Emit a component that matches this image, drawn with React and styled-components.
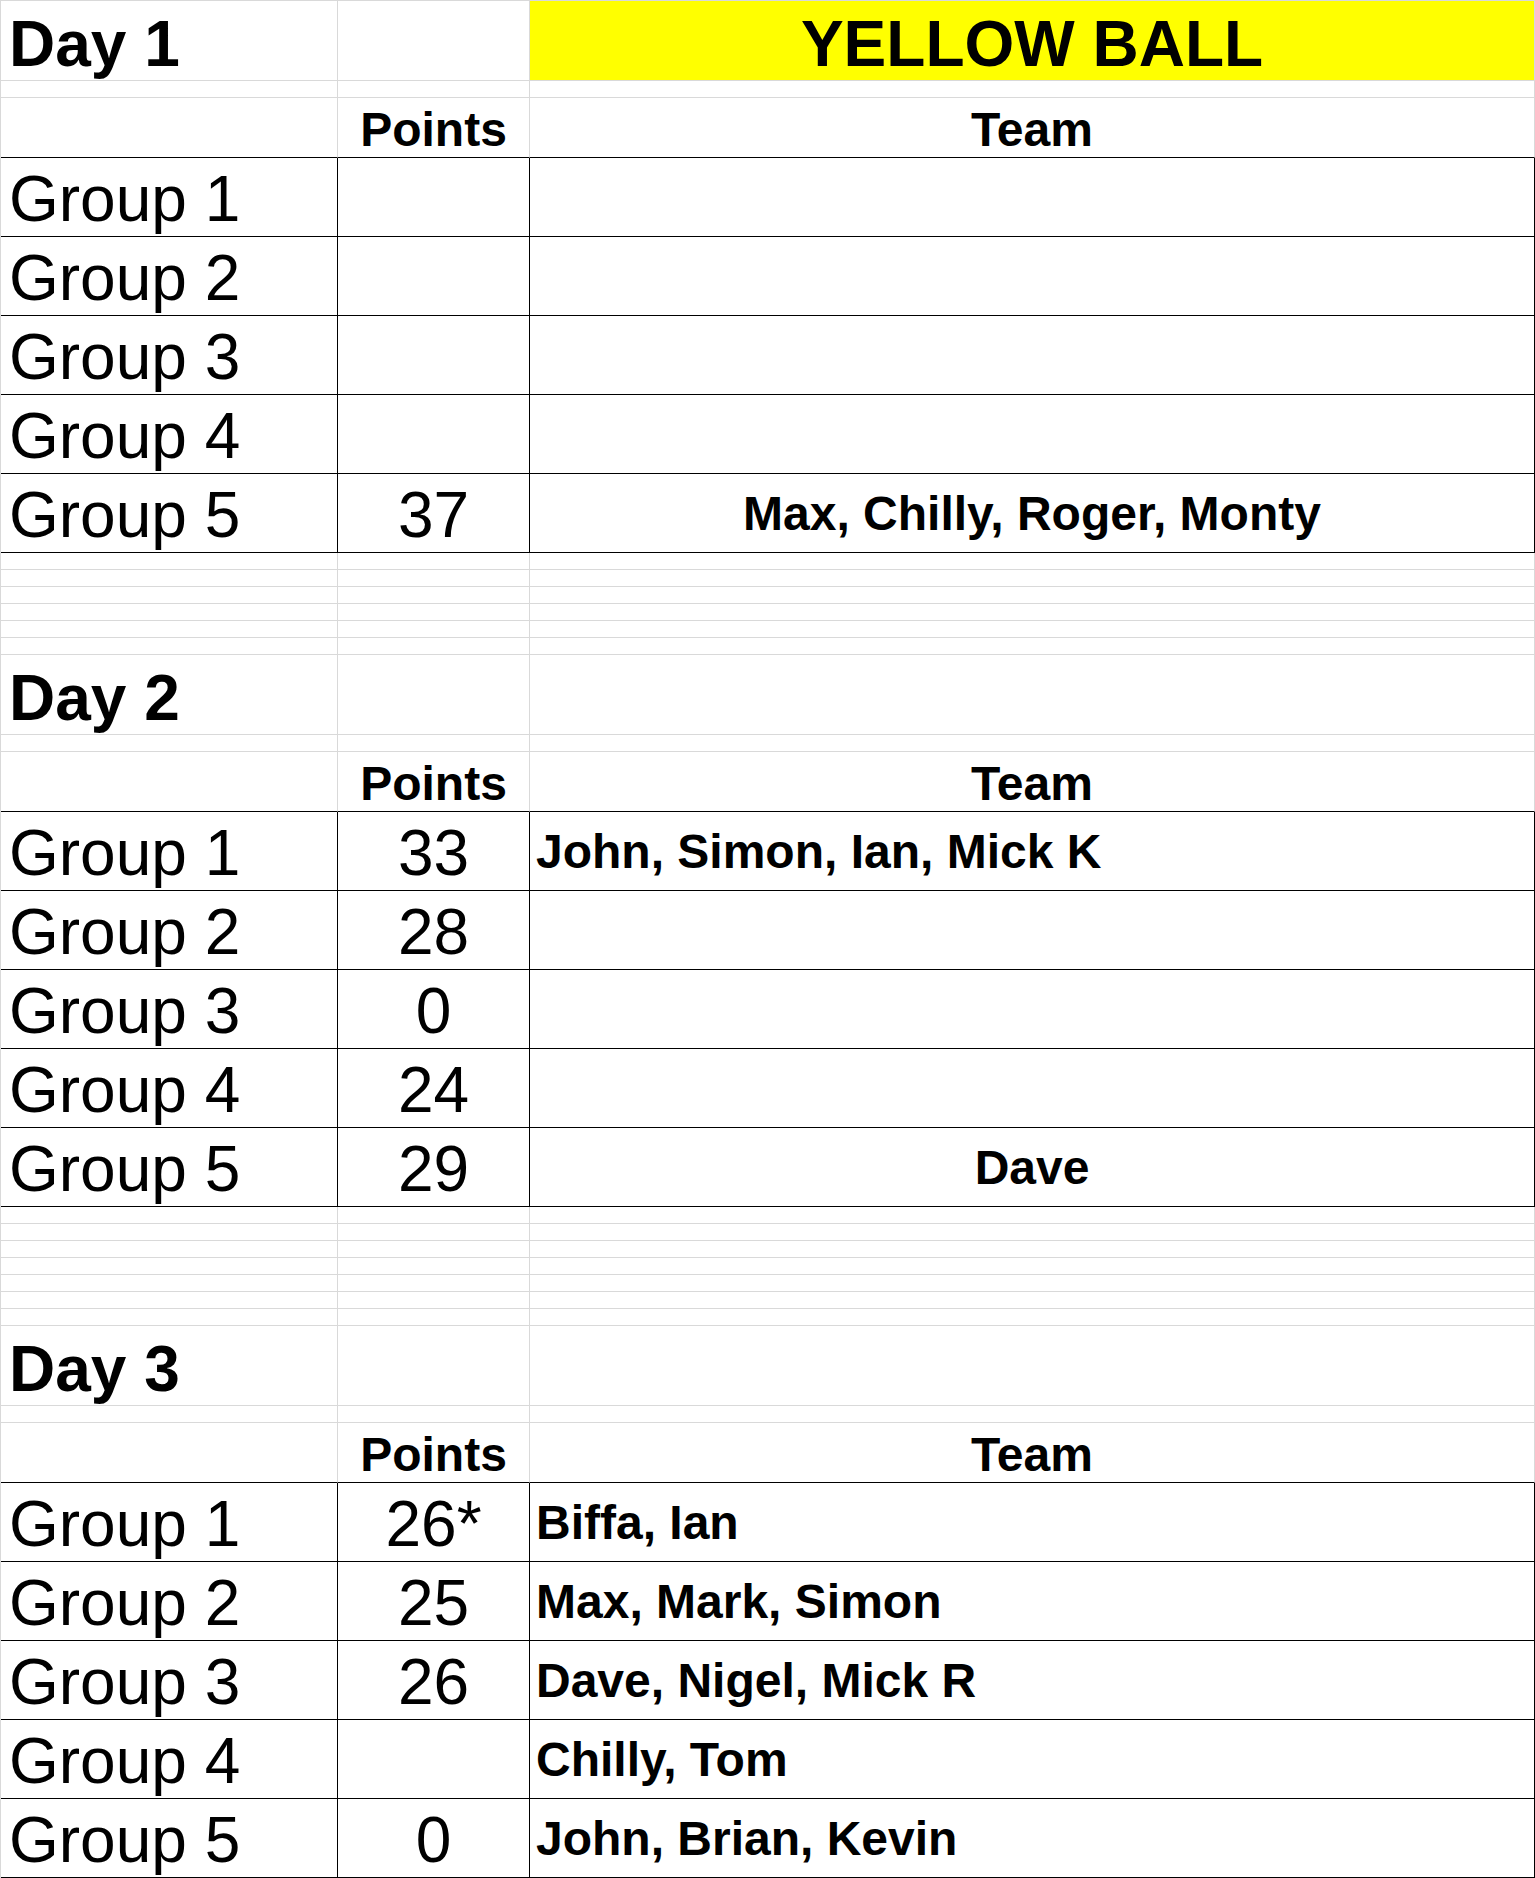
import React from 'react';
import styled, { createGlobalStyle } from 'styled-components';

const GRID = '#d9d9d9';
const INK = '#000';

const GlobalStyle = createGlobalStyle`
    html,
    body {
        margin: 0;
        padding: 0;
        background: #fff;
    }
    body {
        font-family: "Liberation Sans", Arial, sans-serif;
        color: ${INK};
    }
`;

const ROW_HEIGHT = {
    day: 80,
    spacer: 17,
    header: 60,
    group: 79,
};

const Sheet = styled.div`
    width: 1535px;
    box-sizing: border-box;
    border-top: 1px solid ${GRID};
    border-left: 1px solid ${GRID};
`;

const Row = styled.div`
    display: grid;
    grid-template-columns: 337px 192px 1005px;
    height: ${({ $kind }) => ROW_HEIGHT[$kind]}px;
`;

const Cell = styled.div`
    box-sizing: border-box;
    display: flex;
    min-width: 0;
    overflow: hidden;
    white-space: nowrap;
    align-items: ${({ $valign }) => ($valign === 'center' ? 'center' : 'flex-end')};
    justify-content: ${({ $align }) =>
        $align === 'center' ? 'center' : $align === 'right' ? 'flex-end' : 'flex-start'};
    padding: ${({ $pad }) => ($pad !== undefined ? $pad : '0')};
    background: ${({ $fill }) => $fill || 'transparent'};
    border-right: 1px solid ${({ $boxed }) => ($boxed ? INK : GRID)};
    border-bottom: 1px solid ${({ $boxed, $underline }) => ($boxed || $underline ? INK : GRID)};
`;

const DayTitle = styled.span`
    font-size: 64px;
    font-weight: 700;
    line-height: normal;
    margin-bottom: -1px;
`;

const Banner = styled.span`
    font-size: 64px;
    font-weight: 700;
    line-height: normal;
    margin-bottom: -1px;
`;

const HeadLabel = styled.span`
    font-size: 48px;
    font-weight: 700;
    line-height: normal;
`;

const GroupLabel = styled.span`
    font-size: 64px;
    font-weight: 400;
    line-height: normal;
`;

const Score = styled.span`
    font-size: 64px;
    font-weight: 400;
    line-height: normal;
`;

const Names = styled.span`
    font-size: 48px;
    font-weight: 700;
    line-height: normal;
`;

const days = [
    {
        title: 'Day 1',
        banner: 'YELLOW BALL',
        gap: 6,
        groups: [
            { points: '', team: '' },
            { points: '', team: '' },
            { points: '', team: '' },
            { points: '', team: '' },
            { points: '37', team: 'Max, Chilly, Roger, Monty', centered: true },
        ],
    },
    {
        title: 'Day 2',
        gap: 7,
        groups: [
            { points: '33', team: 'John, Simon, Ian, Mick K' },
            { points: '28', team: '' },
            { points: '0', team: '' },
            { points: '24', team: '' },
            { points: '29', team: 'Dave', centered: true },
        ],
    },
    {
        title: 'Day 3',
        gap: 0,
        groups: [
            { points: '26*', team: 'Biffa, Ian' },
            { points: '25', team: 'Max, Mark, Simon' },
            { points: '26', team: 'Dave, Nigel, Mick R' },
            { points: '', team: 'Chilly, Tom' },
            { points: '0', team: 'John, Brian, Kevin' },
        ],
    },
];

const SpacerRow = () => (
    <Row $kind="spacer">
        <Cell />
        <Cell />
        <Cell />
    </Row>
);

const DayBlock = ({ day }) => (
    <>
        <Row $kind="day">
            <Cell $pad="0 0 0 8px">
                <DayTitle>{day.title}</DayTitle>
            </Cell>
            <Cell />
            <Cell $align="center" $fill={day.banner ? '#ffff00' : undefined}>
                {day.banner && <Banner>{day.banner}</Banner>}
            </Cell>
        </Row>
        <SpacerRow />
        <Row $kind="header">
            <Cell $underline />
            <Cell $underline $align="center">
                <HeadLabel>Points</HeadLabel>
            </Cell>
            <Cell $underline $align="center">
                <HeadLabel>Team</HeadLabel>
            </Cell>
        </Row>
        {day.groups.map((g, i) => (
            <Row $kind="group" key={i}>
                <Cell $boxed $pad="0 0 0 8px">
                    <GroupLabel>Group {i + 1}</GroupLabel>
                </Cell>
                <Cell $boxed $align="center">
                    {g.points && <Score>{g.points}</Score>}
                </Cell>
                <Cell $boxed $align={g.centered ? 'center' : 'left'} $valign="center" $pad="0 6px">
                    {g.team && <Names>{g.team}</Names>}
                </Cell>
            </Row>
        ))}
        {Array.from({ length: day.gap }).map((_, i) => (
            <SpacerRow key={`gap-${i}`} />
        ))}
    </>
);

const App = () => (
    <>
        <GlobalStyle />
        <Sheet>
            {days.map(day => (
                <DayBlock key={day.title} day={day} />
            ))}
        </Sheet>
    </>
);

export default App;
